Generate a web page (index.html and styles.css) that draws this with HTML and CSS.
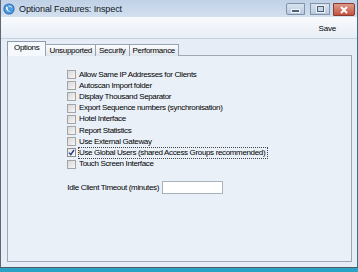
FILE: index.html
```html
<!DOCTYPE html>
<html lang="en">
<head>
  <meta charset="UTF-8">
  <title>Optional Features: Inspect</title>
  <link rel="stylesheet" href="styles.css">
</head>
<body>

  <div class="window">
    <div class="titlebar">
      <svg class="app-icon" width="12" height="12" viewBox="0 0 12 12">
        <circle cx="6" cy="6" r="5.6" fill="#2a6fb8"/>
        <circle cx="6" cy="6" r="4.6" fill="#4f9be0"/>
        <path d="M3.2 3.6 C2.4 6.4 4.4 9 7.6 8.6 C5.4 8.2 4.2 6.4 4.8 4.2 Z" fill="#ffffff"/>
        <path d="M5.6 2.4 C7.6 2.2 9.4 3.6 9.4 5.6 C8.6 4.4 7.2 3.6 5.6 3.6 Z" fill="#dfefff"/>
      </svg>
      <span class="title">Optional Features: Inspect</span>
      <div class="controls">
        <div class="ctl ctl-min"><span class="dash"></span></div>
        <div class="ctl ctl-max"><span class="box"></span></div>
        <div class="ctl ctl-close">
          <svg width="10" height="8" viewBox="0 0 10 8">
            <path d="M2 1 L8 7 M8 1 L2 7" stroke="#ffffff" stroke-width="2"/>
          </svg>
        </div>
      </div>
    </div>

    <div class="toolbar">
      <span class="save">Save</span>
    </div>

    <div class="content">
      <div class="tabs">
        <div class="tab active">Options</div>
        <div class="tab">Unsupported</div>
        <div class="tab">Security</div>
        <div class="tab">Performance</div>
      </div>

      <div class="panel">
        <div class="checklist">
          <div class="check-row"><span class="cb"></span><span class="lbl">Allow Same IP Addresses for Clients</span></div>
          <div class="check-row"><span class="cb"></span><span class="lbl">Autoscan Import folder</span></div>
          <div class="check-row"><span class="cb"></span><span class="lbl">Display Thousand Separator</span></div>
          <div class="check-row"><span class="cb"></span><span class="lbl">Export Sequence numbers (synchronisation)</span></div>
          <div class="check-row"><span class="cb"></span><span class="lbl">Hotel Interface</span></div>
          <div class="check-row"><span class="cb"></span><span class="lbl">Report Statistics</span></div>
          <div class="check-row"><span class="cb"></span><span class="lbl">Use External Gateway</span></div>
          <div class="check-row">
            <span class="cb checked">
              <svg width="7" height="7" viewBox="0 0 7 7"><path d="M1 3.6 L2.8 5.6 L6 1" fill="none" stroke="#1c3f8c" stroke-width="1.4"/></svg>
            </span>
            <span class="lbl focused">Use Global Users (shared Access Groups recommended)</span>
          </div>
          <div class="check-row"><span class="cb"></span><span class="lbl">Touch Screen Interface</span></div>
        </div>

        <div class="field-row">
          <label class="field-label">Idle Client Timeout (minutes)</label>
          <input type="text" class="field-input">
        </div>
      </div>
    </div>
  </div>

</body>
</html>
```

FILE: styles.css
```css
body {
  margin: 0;
  width: 358px;
  height: 272px;
  overflow: hidden;
  background-color: #2aa3c4;
  font-family: "Liberation Sans", Arial, sans-serif;
  color: #000000;
}

.window {
  height: 268px;
  display: flex;
  flex-direction: column;
  background-color: #dbe5f0;
  border-left: 1px solid #5d6875;
  border-right: 1px solid #3d6f82;
  border-bottom: 1px solid #4e5c6a;
  box-sizing: border-box;
}

/* title bar */
.titlebar {
  height: 17px;
  display: flex;
  align-items: center;
  padding-left: 2px;
  background: linear-gradient(#c0d1e6, #d3e0ef);
}

.app-icon {
  margin-right: 4px;
}

.title {
  font-size: 9px;
  letter-spacing: -0.1px;
  color: #10161e;
}

.controls {
  margin-left: auto;
  display: flex;
  align-items: flex-start;
  align-self: flex-start;
  margin-top: 3px;
  margin-right: 2px;
}

.ctl {
  height: 12px;
  box-sizing: border-box;
  border: 1px solid #8093ab;
  display: flex;
  align-items: center;
  justify-content: center;
}

.ctl-min {
  width: 19px;
  border-radius: 2px 0 0 2px;
  background: linear-gradient(#d8e3f0, #b9cadf);
}

.ctl-max {
  width: 20px;
  margin-left: 5px;
  background: linear-gradient(#d8e3f0, #b9cadf);
}

.ctl-close {
  width: 22px;
  margin-left: 3px;
  height: 13px;
  border-color: #8b3a32;
  border-radius: 0 2px 2px 0;
  background: linear-gradient(#e09a88, #c4533f);
}

.dash {
  width: 7px;
  height: 2px;
  margin-top: 3px;
  background-color: #4d5d72;
  border: 1px solid #f2f5f9;
}

.box {
  width: 5px;
  height: 4px;
  border: 1px solid #4d5d72;
  box-shadow: 0 0 0 1px #eef2f7;
}

/* toolbar */
.toolbar {
  height: 21px;
  display: flex;
  align-items: center;
  justify-content: flex-end;
  padding-right: 21px;
  background: linear-gradient(#f8fafd, #e8eef6);
  border-bottom: 1px solid #c5d1de;
}

.save {
  font-size: 8px;
  letter-spacing: -0.2px;
  margin-top: 1px;
}

/* tabs and panel */
.content {
  flex: 1;
  display: flex;
  flex-direction: column;
  padding: 3px 5px 5px 6px;
  background-color: #e6edf6;
}

.tabs {
  display: flex;
  align-items: flex-end;
  height: 14px;
  position: relative;
  z-index: 1;
}

.tab {
  height: 11px;
  padding: 0 3px;
  font-size: 8px;
  letter-spacing: -0.3px;
  line-height: 11px;
  border: 1px solid #98a3b1;
  border-bottom: none;
  margin-left: -1px;
  background: linear-gradient(#fbfcfe, #dfe5ed);
}

.tab.active {
  height: 14px;
  padding: 0 6px;
  margin-left: 0;
  line-height: 12px;
  background: #f5f8fc;
  border-color: #8f9bab;
}

.panel {
  flex: 1;
  margin-top: -1px;
  border: 1px solid #9ea7b3;
  background-color: #eaf0f8;
  font-size: 8px;
  letter-spacing: -0.35px;
}

.checklist {
  margin: 13px 0 0 59px;
}

.check-row {
  height: 11.2px;
  display: flex;
  align-items: center;
}

.cb {
  width: 9px;
  height: 9px;
  box-sizing: border-box;
  border: 1px solid #a4a4a4;
  background: linear-gradient(135deg, #d8d8d8, #f6f6f6);
  margin-right: 3px;
  display: flex;
  align-items: center;
  justify-content: center;
  flex-shrink: 0;
}

.cb.checked {
  background: linear-gradient(135deg, #e4e4e4, #fbfbfb);
  border-color: #8e8e8e;
}

.lbl {
  white-space: nowrap;
  line-height: 10px;
}

.lbl.focused {
  outline: 1px dotted #444;
  padding-right: 2px;
}

.field-row {
  display: flex;
  align-items: center;
  margin-top: 11px;
}

.field-label {
  width: 151px;
  text-align: right;
  white-space: nowrap;
}

.field-input {
  width: 61px;
  height: 13px;
  box-sizing: border-box;
  margin: 0 0 0 3px;
  padding: 0;
  border: 1px solid #a9b1bb;
  background-color: #ffffff;
}
```
